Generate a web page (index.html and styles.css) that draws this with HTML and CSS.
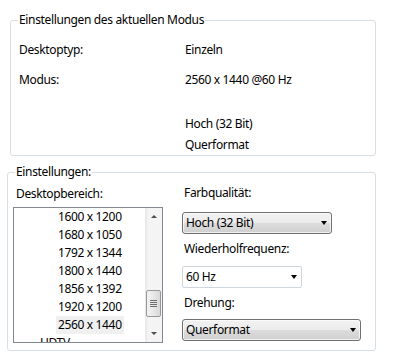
FILE: index.html
```html
<!DOCTYPE html>
<html lang="de">
<head>
    <meta charset="utf-8">
    <title>Anzeigeeinstellungen</title>
    <link rel="stylesheet" href="styles.css">
</head>
<body>

<div class="page">
    <fieldset class="group current">
        <legend>Einstellungen des aktuellen Modus</legend>
        <div class="row first"><span class="key">Desktoptyp:</span><span>Einzeln</span></div>
        <div class="row"><span class="key">Modus:</span><span>2560 x 1440 @60 Hz</span></div>
        <div class="row depth"><span class="key"></span><span>Hoch (32 Bit)</span></div>
        <div class="row orient"><span class="key"></span><span>Querformat</span></div>
    </fieldset>

    <fieldset class="group settings">
        <legend>Einstellungen:</legend>
        <div class="cols">
            <div class="left">
                <div class="label area">Desktopbereich:</div>
                <div class="listbox">
                    <ul class="items">
                        <li><span>1600 x 1200</span></li>
                        <li><span>1680 x 1050</span></li>
                        <li><span>1792 x 1344</span></li>
                        <li><span>1800 x 1440</span></li>
                        <li><span>1856 x 1392</span></li>
                        <li><span>1920 x 1200</span></li>
                        <li class="selected"><span>2560 x 1440</span></li>
                        <li class="head"><span>HDTV</span></li>
                    </ul>
                    <div class="scrollbar">
                        <div class="sb-btn"><span class="sb-arrow up"></span></div>
                        <div class="track"><div class="thumb"><i></i><i></i><i></i><i></i></div></div>
                        <div class="sb-btn"><span class="sb-arrow down"></span></div>
                    </div>
                </div>
            </div>
            <div class="right">
                <div class="label">Farbqualität:</div>
                <div class="combo c-color"><span>Hoch (32 Bit)</span><span class="arrow"></span></div>
                <div class="label">Wiederholfrequenz:</div>
                <div class="combo flat c-rate"><span>60 Hz</span><span class="arrow"></span></div>
                <div class="label">Drehung:</div>
                <div class="combo c-rotate"><span>Querformat</span><span class="arrow"></span></div>
            </div>
        </div>
    </fieldset>
</div>

</body>
</html>
```

FILE: styles.css
```css
* {
    margin: 0;
    padding: 0;
    box-sizing: border-box;
}

body {
    font-size: 12px;
    line-height: 16px;
    letter-spacing: -0.35px;
    font-family: "Noto Sans", "Open Sans", sans-serif;
    color: #000;
    background: #fff;
}

.group {
    border: 1px solid #d5dfe5;
    border-radius: 3px;
}

.group legend {
    padding: 0 1px;
    line-height: 16px;
}

/* oberer Block */
.current {
    width: 366px;
    height: 144px;
    margin: 12px 0 0 10px;
    padding: 0 8px;
}

.current legend {
    margin-left: -1px;
}

.row {
    display: flex;
    margin-top: 14px;
}

.row .key {
    width: 166px;
    flex: none;
}

.row.first {
    margin-top: 14px;
}

.row.depth {
    margin-top: 28px;
}

.row.orient {
    margin-top: 5px;
}

/* unterer Block */
.settings {
    width: 369px;
    height: 187px;
    margin: 8px 0 0 7px;
    padding: 0 5px;
}

.settings legend {
    margin-left: 2px;
}

.cols {
    display: flex;
    gap: 19px;
    margin-top: 5px;
}

.left {
    width: 150px;
}

.right {
    width: 180px;
}

.label {
    padding-left: 2px;
}

.label.area {
    margin-top: 1px;
    padding-left: 3px;
}

/* Liste */
.listbox {
    display: flex;
    height: 136px;
    margin-top: 5px;
    border: 1px solid #828790;
    background: #fff;
}

.items {
    flex: 1;
    list-style: none;
    overflow: hidden;
}

.items li {
    height: 18px;
    line-height: 18px;
    padding-left: 42px;
}

.items li span {
    display: inline-block;
    padding: 0 2px;
}

.items li.selected span {
    background: #f0f0f0;
}

.items li.head {
    padding-left: 24px;
}

.scrollbar {
    width: 17px;
    display: flex;
    flex-direction: column;
    background: linear-gradient(to right, #e6e6e6, #f4f4f4 20%, #f4f4f4);
}

.sb-btn {
    height: 17px;
    display: flex;
    align-items: center;
    justify-content: center;
}

.sb-arrow {
    width: 0;
    height: 0;
    border-left: 3px solid transparent;
    border-right: 3px solid transparent;
}

.sb-arrow.up {
    border-bottom: 3px solid #4d4d4d;
}

.sb-arrow.down {
    border-top: 3px solid #4d4d4d;
}

.track {
    flex: 1;
}

.thumb {
    width: 15px;
    height: 27px;
    margin: 65px 0 0 1px;
    border: 1px solid #979797;
    border-radius: 2px;
    background: linear-gradient(to right, #f3f3f3, #e8e8e8 50%, #d8d8d8);
    display: flex;
    flex-direction: column;
    align-items: center;
    justify-content: center;
    gap: 1px;
}

.thumb i {
    display: block;
    width: 7px;
    height: 1px;
    background: #6d6d6d;
}

/* Auswahlfelder */
.combo {
    display: flex;
    align-items: center;
    justify-content: space-between;
    height: 22px;
    padding: 0 4px 0 3px;
    border: 1px solid #707070;
    border-radius: 3px;
    background: linear-gradient(#f2f2f2 0%, #ebebeb 50%, #dddddd 50%, #cfcfcf 100%);
    box-shadow: inset 0 0 0 1px rgba(255, 255, 255, 0.7);
}

.combo.flat {
    border-color: #d0d6dd;
    border-radius: 2px;
    background: #fff;
    box-shadow: none;
}

.combo .arrow {
    width: 0;
    height: 0;
    border-left: 3.5px solid transparent;
    border-right: 3.5px solid transparent;
    border-top: 4px solid #000;
}

.c-color {
    width: 150px;
    margin: 11px 0 7px;
}

.c-rate {
    width: 120px;
    margin: 9px 0 7px;
}

.c-rotate {
    width: 179px;
    margin-top: 8px;
}
```
